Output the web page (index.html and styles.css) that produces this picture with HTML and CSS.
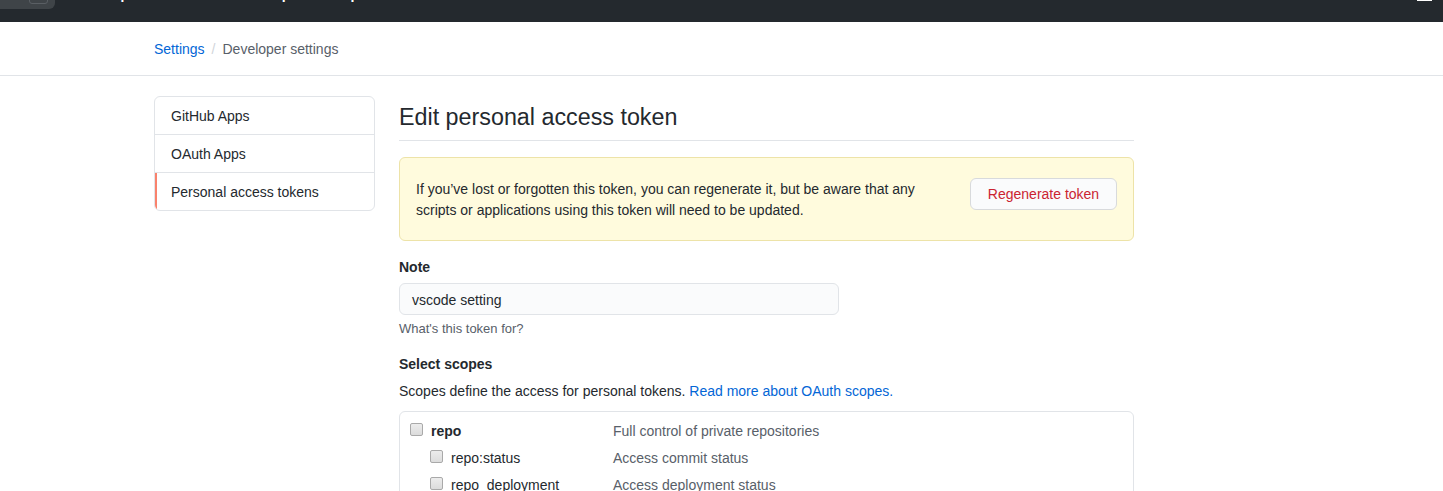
FILE: index.html
```html
<!DOCTYPE html>
<html lang="en">
<head>
<meta charset="utf-8">
<title>Edit personal access token</title>
<link rel="stylesheet" href="styles.css">
</head>
<body>
<header class="topbar">
  <div class="topbar-row">
    <div class="search"><span class="key">/</span></div>
    <nav class="topnav">
      <a href="#">Pull requests</a>
      <a href="#">Issues</a>
      <a href="#">Marketplace</a>
      <a href="#">Explore</a>
    </nav>
    <span class="menu-bar"></span>
  </div>
</header>

<div class="crumbbar">
  <div class="container">
    <a class="crumb-link" href="#">Settings</a><span class="crumb-sep">/</span><span class="crumb-current">Developer settings</span>
  </div>
</div>

<div class="container layout">
  <aside class="sidebar">
    <a class="side-item" href="#">GitHub Apps</a>
    <a class="side-item" href="#">OAuth Apps</a>
    <a class="side-item selected" href="#">Personal access tokens</a>
  </aside>

  <main class="main">
    <div class="subhead">
      <h2 class="subhead-title">Edit personal access token</h2>
    </div>

    <div class="flash">
      <p class="flash-text">If you’ve lost or forgotten this token, you can regenerate it, but be aware that any<br>scripts or applications using this token will need to be updated.</p>
      <button class="btn-danger" type="button">Regenerate token</button>
    </div>

    <div class="form-group">
      <label class="form-label">Note</label>
      <div class="input">vscode setting</div>
      <p class="note">What's this token for?</p>
    </div>

    <h3 class="form-label scopes-title">Select scopes</h3>
    <p class="scopes-desc">Scopes define the access for personal tokens. <a href="#">Read more about OAuth scopes.</a></p>

    <div class="scopes">
      <div class="scope-row">
        <div class="scope-name"><span class="cb"></span><strong>repo</strong></div>
        <div class="scope-info">Full control of private repositories</div>
      </div>
      <div class="scope-row">
        <div class="scope-name sub"><span class="cb"></span>repo:status</div>
        <div class="scope-info">Access commit status</div>
      </div>
      <div class="scope-row">
        <div class="scope-name sub"><span class="cb"></span>repo_deployment</div>
        <div class="scope-info">Access deployment status</div>
      </div>
    </div>
  </main>
</div>
</body>
</html>
```

FILE: styles.css
```css
* { box-sizing: border-box; }
html, body { margin: 0; padding: 0; }
body {
  font-family: "Liberation Sans", Arial, sans-serif;
  font-size: 14px;
  line-height: 21px;
  color: #24292e;
  background: #fff;
  overflow: hidden;
}
a { text-decoration: none; }

.topbar {
  height: 22px;
  background: #24292e;
  overflow: hidden;
}
.topbar-row {
  display: flex;
  align-items: center;
  height: 30px;
  margin-top: -21px;
}
.search {
  width: 55px;
  height: 30px;
  background: #3f4448;
  border-radius: 0 6px 6px 0;
  position: relative;
  flex: none;
}
.key {
  position: absolute;
  left: 29px;
  top: 7px;
  width: 19px;
  height: 18px;
  border: 1px solid #5a5f64;
  border-radius: 3px;
  color: #959da5;
  font-size: 10px;
  line-height: 16px;
  text-align: center;
}
.topnav {
  display: flex;
  gap: 16px;
  margin-left: 18px;
}
.topnav a {
  color: #fff;
  font-weight: bold;
  font-size: 14px;
  white-space: nowrap;
}
.menu-bar {
  margin-left: auto;
  margin-right: 11px;
  width: 15px;
  height: 2px;
  background: #fff;
  align-self: flex-end;
  margin-bottom: 8px;
}

.container {
  width: 980px;
  margin-left: 154px;
}
.crumbbar {
  border-bottom: 1px solid #e1e4e8;
  padding: 17px 0 15px;
}
.crumb-link { color: #0366d6; }
.crumb-sep { color: #d1d5da; margin: 0 7px; }
.crumb-current { color: #586069; }

.layout {
  display: flex;
  gap: 24px;
  margin-top: 20px;
}
.sidebar {
  width: 221px;
  flex: none;
  border: 1px solid #e1e4e8;
  border-radius: 6px;
  align-self: flex-start;
  overflow: hidden;
}
.side-item {
  display: block;
  padding: 9px 16px 7px;
  color: #24292e;
  border-bottom: 1px solid #e1e4e8;
}
.side-item:last-child { border-bottom: 0; }
.side-item.selected {
  border-left: 2px solid #f9826c;
  padding-left: 14px;
}

.main { width: 735px; flex: none; }
.subhead {
  border-bottom: 1px solid #e1e4e8;
  padding-bottom: 5px;
  margin-bottom: 16px;
}
.subhead-title {
  margin: 3px 0 0;
  font-size: 23.3px;
  line-height: 36px;
  font-weight: 400;
}

.flash {
  display: flex;
  justify-content: space-between;
  align-items: flex-start;
  padding: 21px 16px 19px;
  background: #fffbdd;
  border: 1px solid #ede3a8;
  border-radius: 6px;
}
.flash-text { margin: 0; }
.btn-danger {
  font-family: inherit;
  font-size: 14px;
  line-height: 20px;
  padding: 5px 16px;
  height: 32px;
  width: 147px;
  margin-top: -1px;
  color: #cb2431;
  background: #fafbfc;
  border: 1px solid #d8dadc;
  border-radius: 6px;
}

.form-group { margin-top: 16px; }
.form-label {
  display: block;
  margin: 0 0 5px;
  font-size: 14px;
  font-weight: bold;
}
.input {
  width: 440px;
  height: 32px;
  padding: 6px 12px 4px;
  background: #fafbfc;
  border: 1px solid #e1e4e8;
  border-radius: 6px;
  line-height: 20px;
}
.note {
  margin: 5px 0 0;
  font-size: 13px;
  line-height: 18px;
  color: #586069;
}
.scopes-title { margin: 16px 0 6px; }
.scopes-desc { margin: 0 0 9px; }
.scopes-desc a { color: #0366d6; }

.scopes {
  border: 1px solid #e1e4e8;
  border-radius: 6px;
  padding-top: 9px;
  height: 120px;
}
.scope-row {
  display: grid;
  grid-template-columns: 213px 1fr;
  margin-bottom: 6px;
}
.scope-name {
  display: flex;
  align-items: center;
  padding-left: 10px;
}
.scope-name.sub { padding-left: 30px; }
.scope-info { color: #586069; }
.cb {
  width: 13px;
  height: 13px;
  margin-right: 8px;
  margin-top: -4px;
  border: 1px solid #a9a9a9;
  border-radius: 2px;
  background: linear-gradient(#ececec, #dcdcdc);
  flex: none;
}
```
